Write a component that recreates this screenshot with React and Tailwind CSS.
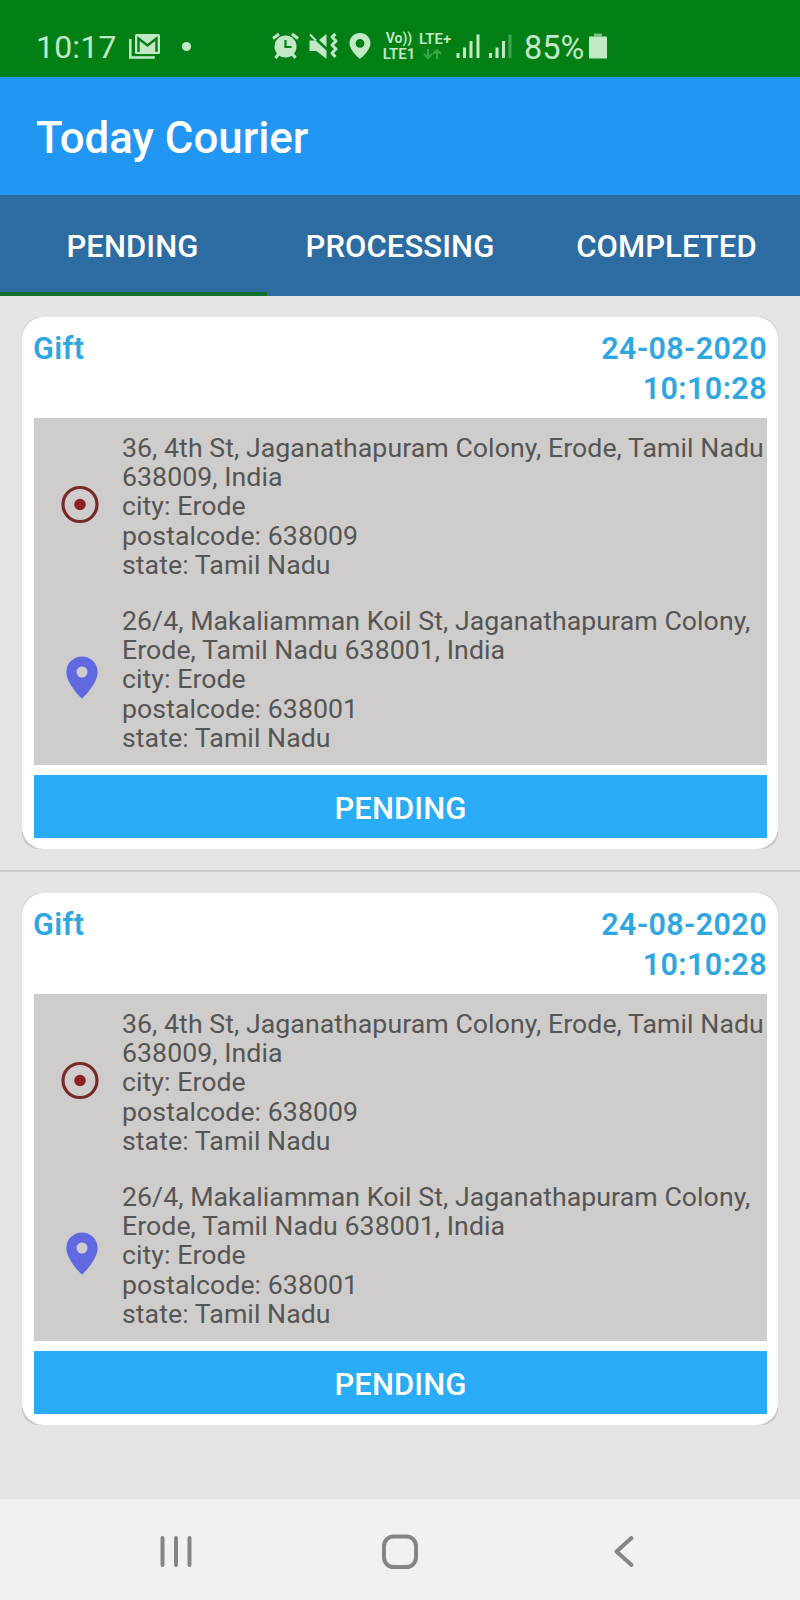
import React from "react";

const couriers = [
  { id: 1, type: "Gift", date: "24-08-2020", time: "10:10:28", status: "PENDING" },
  { id: 2, type: "Gift", date: "24-08-2020", time: "10:10:28", status: "PENDING" },
];

const pickup = [
  "36, 4th St, Jaganathapuram Colony, Erode, Tamil Nadu",
  "638009, India",
  "city: Erode",
  "postalcode: 638009",
  "state: Tamil Nadu",
];

const drop = [
  "26/4, Makaliamman Koil St, Jaganathapuram Colony,",
  "Erode, Tamil Nadu 638001, India",
  "city: Erode",
  "postalcode: 638001",
  "state: Tamil Nadu",
];

function StatusBar() {
  return (
    <div className="h-[77px] bg-[#028015] text-[#c3e8c6] flex items-start pt-[30px] pl-[36px]">
      <span className="w-[92px] shrink-0 text-[32px] leading-[34px] tracking-[0.2px]">10:17</span>

      {/* Mail and more notifications */}
      <svg className="w-[66px] h-[34px] shrink-0" viewBox="0 0 66 34" fill="none">
        <path d="M2.3 9v18.5h24.5" stroke="currentColor" strokeWidth="2.6" />
        <rect x="7" y="4" width="25" height="20" rx="1.5" fill="currentColor" />
        <path d="M10.5 22V8.5l9 7 9-7V22" stroke="#028015" strokeWidth="2.4" />
        <circle cx="58.5" cy="16.5" r="4.6" fill="currentColor" />
      </svg>

      {/* Alarm, vibrate, location */}
      <svg className="w-[104px] h-[34px] shrink-0 ml-[76px]" viewBox="0 0 104 34" fill="none" stroke="currentColor">
        <circle cx="15.5" cy="16.5" r="11" fill="currentColor" stroke="none" />
        <path d="M3 8.5l6-4.5M28 8.5L22 4M8.5 24l-3 4M22.5 24l3 4" strokeWidth="3" />
        <path d="M15.5 10v7h6" stroke="#028015" strokeWidth="2.2" />
        <path d="M39.5 10.5h6l11 10v8.5L46.5 21h-7z" fill="currentColor" stroke="none" />
        <path d="M56.5 4v13L49 10z" fill="currentColor" stroke="none" />
        <path d="M40 4.5l6 6" strokeWidth="2" />
        <path
          d="M65.5 4l-3.5 3 4 4-4 4 4 4-4 4 3.5 4"
          strokeWidth="3"
          strokeLinejoin="round"
        />
        <path
          d="M90 3c-6 0-10.5 4.5-10.5 10.3C79.5 20.5 90 29 90 29s10.5-8.5 10.5-15.7C100.5 7.5 96 3 90 3zm0 6a4.4 4.4 0 110 8.8 4.4 4.4 0 010-8.8z"
          fill="currentColor"
          fillRule="evenodd"
          stroke="none"
        />
      </svg>

      <div className="w-[42px] shrink-0 ml-[4px] text-[14px] leading-[16px] font-semibold text-center">
        <div>Vo))</div>
        <div className="text-[15px] leading-[17px]">LTE1</div>
      </div>
      <div className="w-[36px] shrink-0 pt-[2px] text-[15px] leading-[14px] font-semibold">
        <div className="-ml-px">LTE+</div>
        <svg className="w-[20px] h-[12px] ml-[3px] mt-[2px]" viewBox="0 0 20 12" fill="none" stroke="#3fa54b" strokeWidth="2">
          <path d="M5 1v9M1 6l4 4 4-4M14 11V2M10 6l4-4 4 4" />
        </svg>
      </div>

      {/* Signal strength for both sims */}
      <svg className="w-[60px] h-[34px] shrink-0" viewBox="0 0 60 34" fill="currentColor">
        <rect x="0.5" y="23" width="3" height="5" />
        <rect x="7" y="17.5" width="3" height="10.5" />
        <rect x="13.5" y="11" width="3" height="17" />
        <rect x="20.5" y="4.5" width="3" height="23.5" />
        <rect x="33" y="23" width="3" height="5" />
        <rect x="39.5" y="17.5" width="3" height="10.5" />
        <rect x="46" y="11" width="3" height="17" />
        <rect x="52.5" y="4.5" width="3" height="23.5" opacity="0.35" />
      </svg>

      <span className="w-[72px] shrink-0 pl-[8px] pt-[1px] text-[32.5px] leading-[34px]">85%</span>
      <svg className="w-[20px] h-[34px] shrink-0" viewBox="0 0 20 34" fill="currentColor">
        <rect x="6" y="3.5" width="8" height="3" opacity="0.6" />
        <rect x="1" y="6.5" width="18" height="22" rx="1" />
      </svg>
    </div>
  );
}

function AddressLines({ lines }) {
  return (
    <div className="pt-[0.5px] text-[26.7px] leading-[29.45px] tracking-[0.05px] whitespace-nowrap text-[#555555]">
      {lines.map((line) => (
        <div key={line}>{line}</div>
      ))}
    </div>
  );
}

function CourierCard({ item }) {
  return (
    <div className="mx-[22px] rounded-t-[20px] rounded-b-[16px] bg-[#cbcbcb]">
      <div className="h-[532px] rounded-[22px] bg-white pl-[12px] pr-[11px]">
        <div className="h-[101px] pt-[12px] flex justify-between text-[30.5px] leading-[40px] tracking-[0.4px] font-semibold text-[#2fa6e0]">
          <span className="-ml-px">{item.type}</span>
          <div className="text-right">
            <div>{item.date}</div>
            <div>{item.time}</div>
          </div>
        </div>

        <div className="h-[347px] bg-[#cecdcb] pt-[15px]">
          <div className="flex h-[173px]">
            <svg className="w-[88px] h-[147px] shrink-0" viewBox="0 0 88 147" fill="none">
              <circle cx="46" cy="71.5" r="17" stroke="#762a2c" strokeWidth="3.2" />
              <circle cx="46" cy="71.5" r="5.8" fill="#8c2323" />
            </svg>
            <AddressLines lines={pickup} />
          </div>
          <div className="flex">
            <svg className="w-[88px] h-[147px] shrink-0" viewBox="0 0 88 147">
              <path
                d="M48 50.5c-8.8 0-15.7 7-15.7 15.5C32.3 78 48 92.7 48 92.7S63.7 78 63.7 66c0-8.5-7-15.5-15.7-15.5zm0 10a5.5 5.5 0 110 11 5.5 5.5 0 010-11z"
                fill="#6169e0"
                fillRule="evenodd"
              />
            </svg>
            <AddressLines lines={drop} />
          </div>
        </div>

        <button className="block w-full h-[63px] mt-[10px] pt-[2px] bg-[#29abf6] text-white text-[31px] leading-[63px] tracking-[0.1px] font-medium">
          {item.status}
        </button>
      </div>
    </div>
  );
}

export default function App() {
  return (
    <div className="w-[800px] h-[1600px] flex flex-col overflow-hidden bg-[#e4e4e4] font-['Roboto',sans-serif]">
      <StatusBar />

      <header className="h-[118px] bg-[#2196f3] flex items-center pt-[4px] pl-[36px]">
        <h1 className="text-[43.8px] leading-[50px] font-medium text-white">Today Courier</h1>
      </header>

      {/* Tabs */}
      <nav className="h-[101px] bg-[#2d6ca0] flex text-[31px] tracking-[0.1px] font-medium text-white">
        <button className="w-[267px] pt-[7px] pr-[2px] border-b-4 border-[#11702c]">PENDING</button>
        <button className="w-[266px] pt-[3px]">PROCESSING</button>
        <button className="w-[267px] pt-[3px]">COMPLETED</button>
      </nav>

      <main className="flex-1 pt-[21px]">
        <CourierCard item={couriers[0]} />
        <div className="h-[2px] my-[21px] bg-[#cccccc]" />
        <CourierCard item={couriers[1]} />
      </main>

      {/* System navigation */}
      <footer className="h-[101px] bg-[#f1f1f1] flex justify-center text-[#858585]">
        <svg className="w-[800px] h-[101px]" viewBox="0 0 800 101" fill="none" stroke="currentColor" strokeWidth="4" strokeLinecap="round">
          <path d="M162.5 39v27M176 39v27M189.5 39v27" />
          <rect x="384" y="37.5" width="32" height="30.5" rx="9.5" />
          <path d="M631.5 39l-15 13.5 15 13.5" strokeLinejoin="round" />
        </svg>
      </footer>
    </div>
  );
}
